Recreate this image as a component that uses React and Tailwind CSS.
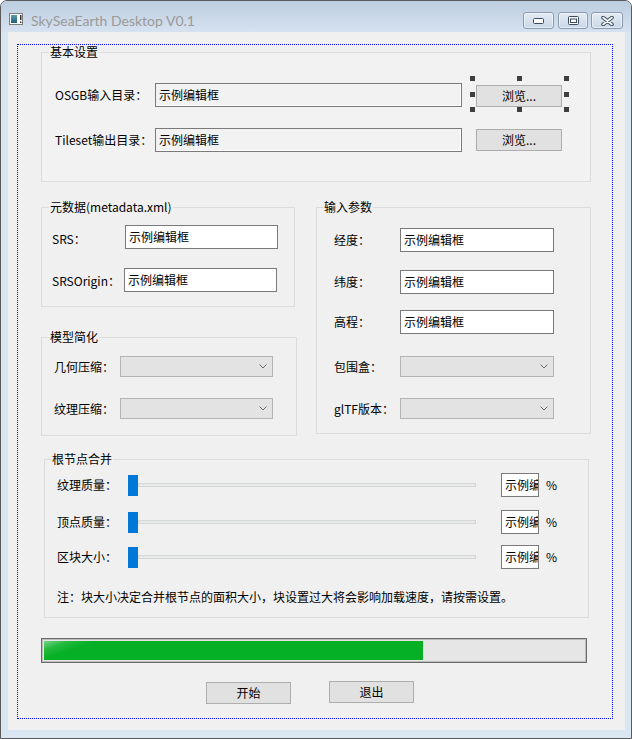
import React from "react";

function Legend({ children, className = "" }) {
  return (
    <legend className={`px-[1px] text-[12px] leading-[14px] text-black ${className}`}>
      {children}
    </legend>
  );
}

function TextBox({ className = "", gray = false }) {
  return (
    <div
      className={`h-[24px] border border-[#7a7a7a] pl-[3px] text-[12px] leading-[21px] overflow-hidden whitespace-nowrap ${
        gray ? "bg-[#f2f2f2] shadow-[inset_-1px_-1px_0_#ffffff]" : "bg-white"
      } ${className}`}
    >
      示例编辑框
    </div>
  );
}

function Combo({ className = "" }) {
  return (
    <div className={`h-[21px] border border-[#b4b4b4] bg-[#e3e3e3] flex items-center justify-end pr-[5px] ${className}`}>
      <svg width="8" height="5" viewBox="0 0 8 5">
        <path d="M0.5 0.5 L4 4 L7.5 0.5" stroke="#6b6b6b" fill="none" />
      </svg>
    </div>
  );
}

function Button({ children, className = "" }) {
  return (
    <button className={`h-[22px] border border-[#adadad] bg-[#e1e1e1] text-[12px] leading-[20px] text-black ${className}`}>
      {children}
    </button>
  );
}

function Handle({ className }) {
  return <span className={`absolute w-[5px] h-[5px] bg-[#3f3f3f] ${className}`} />;
}

function SliderRow({ label, className = "" }) {
  return (
    <div className={`flex items-center h-[24px] pl-[12px] ${className}`}>
      <span className="w-[71px] text-[12px] leading-[14px]">{label}</span>
      <div className="w-[348px] h-[21px] flex items-center">
        <div className="w-[10px] h-[21px] bg-[#0078d7]" />
        <div className="flex-1 h-[4px] bg-[#e7eaea] border border-[#d6d6d6]" />
      </div>
      <div className="ml-[25px] w-[38px] h-[24px] border border-[#7a7a7a] bg-white pl-[3px] text-[12px] leading-[21px] overflow-hidden whitespace-nowrap">
        示例编
      </div>
      <span className="ml-[7px] text-[12px] leading-[14px]">%</span>
    </div>
  );
}

function WinButton({ children, className = "" }) {
  return (
    <div
      className={`h-[17px] rounded-[3px] border border-[#8a9bb0] bg-gradient-to-b from-[#e4ecf5] to-[#c9d7e6] flex items-center justify-center shadow-[inset_0_0_0_1px_rgba(255,255,255,0.5)] ${className}`}
    >
      {children}
    </div>
  );
}

export default function App() {
  return (
    <div className="w-[632px] h-[739px] overflow-hidden bg-white font-['Noto_Sans_CJK_SC','Noto_Sans',sans-serif] text-black">
      <div className="w-[632px] h-[739px] rounded-t-[7px] border border-[#5a5a5a] bg-[#dae6f2] flex flex-col">
        {/* title bar */}
        <div className="h-[31px] flex items-start rounded-t-[6px] bg-gradient-to-b from-[#bccddf] to-[#d6e2f0]">
          <svg className="ml-[8px] mt-[12px]" width="14" height="12" viewBox="0 0 14 12">
            <rect x="0.5" y="0.5" width="13" height="11" fill="#ffffff" stroke="#7d7d7d" />
            <defs>
              <linearGradient id="ig" x1="0" y1="0" x2="0" y2="1">
                <stop offset="0" stopColor="#5aa0a8" />
                <stop offset="1" stopColor="#1f5e7a" />
              </linearGradient>
            </defs>
            <rect x="2" y="2" width="6" height="8" fill="url(#ig)" />
            <rect x="11" y="2" width="1.5" height="5" fill="#333" />
            <rect x="11" y="8.5" width="1.5" height="1.5" fill="#333" />
          </svg>
          <span className="ml-[8px] mt-[10px] text-[14px] leading-[20px] text-[#9a9a9a] font-['Lato',sans-serif]">
            SkySeaEarth Desktop V0.1
          </span>
          <div className="ml-auto mr-[8px] mt-[11px] flex">
            <WinButton className="w-[31px]">
              <svg width="11" height="6" viewBox="0 0 11 6">
                <rect x="0.5" y="0.5" width="10" height="5" rx="1" fill="#ffffff" stroke="#3a4a5c" />
              </svg>
            </WinButton>
            <WinButton className="w-[30px] ml-[4px]">
              <svg width="11" height="9" viewBox="0 0 11 9">
                <rect x="0.5" y="0.5" width="10" height="8" rx="1" fill="#ffffff" stroke="#3a4a5c" />
                <rect x="2.5" y="3" width="6" height="3.5" fill="none" stroke="#3a4a5c" />
              </svg>
            </WinButton>
            <WinButton className="w-[32px] ml-[3px]">
              <svg width="13" height="10" viewBox="0 0 13 10">
                <path d="M2 1.5 L11 8.5 M11 1.5 L2 8.5" stroke="#3a4a5c" strokeWidth="3.6" strokeLinecap="round" />
                <path d="M2 1.5 L11 8.5 M11 1.5 L2 8.5" stroke="#ffffff" strokeWidth="1.6" strokeLinecap="round" />
              </svg>
            </WinButton>
          </div>
        </div>

        {/* client area */}
        <div className="ml-[7px] w-[617px] h-[698px] bg-[#f0f0f0] pt-[12px] pl-[9px]">
          <div className="w-[596px] h-[675px] border border-dotted border-[#0000ff] flex flex-col">
            {/* 基本设置 */}
            <fieldset className="ml-[23px] w-[550px] border border-[#dcdcdc] bg-[#f2f2f2]">
              <Legend className="ml-[7px]">基本设置</Legend>
              <div className="mt-[24px] pl-[13px] pb-[29px]">
                <div className="flex items-start">
                  <span className="w-[100px] h-[24px] flex items-center text-[12px] leading-[14px]">OSGB输入目录：</span>
                  <TextBox gray className="w-[307px]" />
                  <div className="relative ml-[14px] -mt-px">
                    <Button className="w-[86px]">浏览...</Button>
                    <Handle className="left-[-6px] top-[-6px]" />
                    <Handle className="left-[41px] top-[-6px]" />
                    <Handle className="left-[88px] top-[-6px]" />
                    <Handle className="left-[-6px] top-[10px]" />
                    <Handle className="left-[88px] top-[10px]" />
                    <Handle className="left-[-6px] top-[25px]" />
                    <Handle className="left-[41px] top-[25px]" />
                    <Handle className="left-[88px] top-[25px]" />
                  </div>
                </div>
                <div className="flex items-start mt-[21px]">
                  <span className="w-[100px] h-[24px] flex items-center text-[12px] leading-[14px]">Tileset输出目录：</span>
                  <TextBox gray className="w-[307px]" />
                  <Button className="w-[86px] ml-[14px] mt-px">浏览...</Button>
                </div>
              </div>
            </fieldset>

            {/* middle columns */}
            <div className="ml-[23px] mt-[18px] flex items-start">
              <div className="w-[256px] flex flex-col">
                <fieldset className="w-[254px] border border-[#dcdcdc]">
                  <Legend className="ml-[7px]">元数据(metadata.xml)</Legend>
                  <div className="mt-[11px] pl-[10px] pb-[14px]">
                    <div className="flex items-center">
                      <span className="w-[73px] text-[12px] leading-[14px] pt-[3px]">SRS：</span>
                      <TextBox className="w-[153px]" />
                    </div>
                    <div className="flex items-center mt-[19px]">
                      <span className="w-[72px] text-[12px] leading-[14px] pt-[2px]">SRSOrigin：</span>
                      <TextBox className="w-[153px]" />
                    </div>
                  </div>
                </fieldset>
                <fieldset className="w-[256px] mt-[23px] border border-[#dcdcdc]">
                  <Legend className="ml-[7px]">模型简化</Legend>
                  <div className="mt-[12px] pl-[12px] pb-[16px]">
                    <div className="flex items-center">
                      <span className="w-[66px] text-[12px] leading-[14px]">几何压缩：</span>
                      <Combo className="w-[153px]" />
                    </div>
                    <div className="flex items-center mt-[21px]">
                      <span className="w-[66px] text-[12px] leading-[14px]">纹理压缩：</span>
                      <Combo className="w-[153px]" />
                    </div>
                  </div>
                </fieldset>
              </div>

              <fieldset className="ml-[19px] w-[275px] border border-[#dcdcdc]">
                <Legend className="ml-[6px]">输入参数</Legend>
                <div className="mt-[14px] pl-[17px] pb-[14px]">
                  <div className="flex items-center">
                    <span className="w-[66px] text-[12px] leading-[14px]">经度：</span>
                    <TextBox className="w-[154px]" />
                  </div>
                  <div className="flex items-center mt-[18px]">
                    <span className="w-[66px] text-[12px] leading-[14px]">纬度：</span>
                    <TextBox className="w-[154px]" />
                  </div>
                  <div className="flex items-center mt-[16px]">
                    <span className="w-[66px] text-[12px] leading-[14px]">高程：</span>
                    <TextBox className="w-[154px]" />
                  </div>
                  <div className="flex items-center mt-[22px]">
                    <span className="w-[66px] text-[12px] leading-[14px]">包围盒：</span>
                    <Combo className="w-[154px]" />
                  </div>
                  <div className="flex items-center mt-[21px]">
                    <span className="w-[66px] text-[12px] leading-[14px]">glTF版本：</span>
                    <Combo className="w-[154px]" />
                  </div>
                </div>
              </fieldset>
            </div>

            {/* 根节点合并 */}
            <fieldset className="ml-[26px] mt-[16px] w-[545px] border border-[#dcdcdc]">
              <Legend className="ml-[6px]">根节点合并</Legend>
              <div className="mt-[7px] pb-[13px]">
                <SliderRow label="纹理质量：" />
                <SliderRow label="顶点质量：" className="mt-[13px]" />
                <SliderRow label="区块大小：" className="mt-[11px]" />
                <p className="mt-[21px] pl-[12px] text-[12px] leading-[14px]">
                  注：块大小决定合并根节点的面积大小，块设置过大将会影响加载速度，请按需设置。
                </p>
              </div>
            </fieldset>

            {/* progress */}
            <div className="ml-[23px] mt-[20px] w-[546px] h-[25px] border border-[#6c6c6c] bg-[#e6e6e6] shadow-[inset_0_0_0_1px_#bcbcbc] p-[2px] pr-[1px]">
              <div className="w-[379px] h-full bg-[#06b025] bg-[linear-gradient(160deg,rgba(255,255,255,0.45)_0%,rgba(255,255,255,0.12)_6%,rgba(255,255,255,0)_12%)]" />
            </div>

            {/* buttons */}
            <div className="mt-[19px] flex items-start">
              <Button className="ml-[188px] w-[85px]">开始</Button>
              <Button className="ml-[38px] w-[85px] -mt-px">退出</Button>
            </div>
          </div>
        </div>
      </div>
    </div>
  );
}
